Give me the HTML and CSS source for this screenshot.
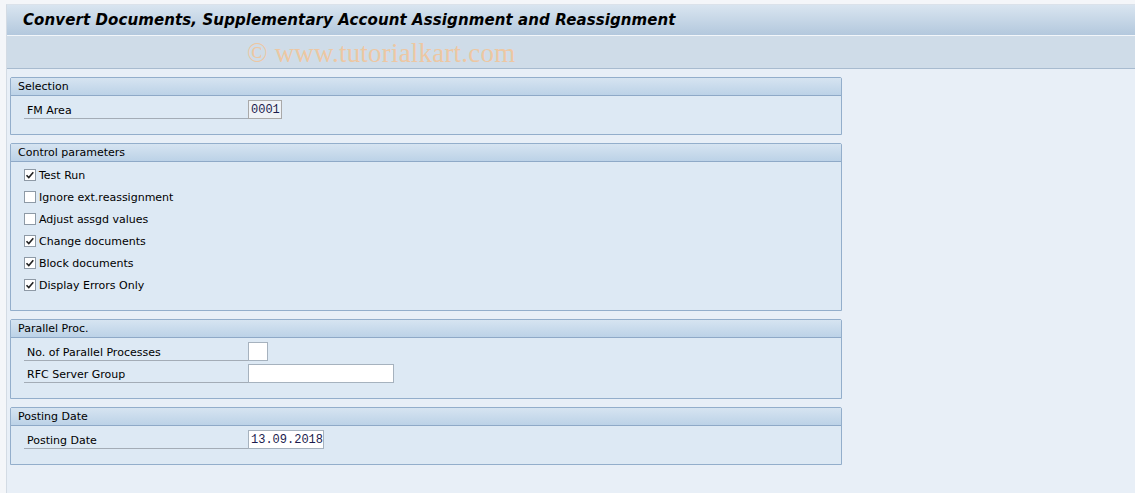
FILE: index.html
```html
<!DOCTYPE html>
<html>
<head>
<meta charset="utf-8">
<title>Convert Documents</title>
<link rel="stylesheet" href="styles.css">
</head>
<body>
<div class="screen">
  <div class="window">
    <div class="titlebar"><h1 class="title">Convert Documents, Supplementary Account Assignment and Reassignment</h1></div>
    <div class="toolbar"><span class="watermark">© www.tutorialkart.com</span></div>
    <div class="content">
      <section class="group">
        <div class="group-head">Selection</div>
        <div class="group-body">
          <div class="row">
            <span class="label">FM Area</span>
            <span class="field field-ro w-4">0001</span>
          </div>
        </div>
      </section>

      <section class="group">
        <div class="group-head">Control parameters</div>
        <div class="group-body">
          <div class="row check-row"><span class="cb checked"><svg viewBox="0 0 12 12" width="12" height="12"><path d="M2.5 6.2 L4.8 8.6 L9.3 3.2" fill="none" stroke="#222" stroke-width="1.6"/></svg></span><span class="cb-label">Test Run</span></div>
          <div class="row check-row"><span class="cb"></span><span class="cb-label">Ignore ext.reassignment</span></div>
          <div class="row check-row"><span class="cb"></span><span class="cb-label">Adjust assgd values</span></div>
          <div class="row check-row"><span class="cb checked"><svg viewBox="0 0 12 12" width="12" height="12"><path d="M2.5 6.2 L4.8 8.6 L9.3 3.2" fill="none" stroke="#222" stroke-width="1.6"/></svg></span><span class="cb-label">Change documents</span></div>
          <div class="row check-row"><span class="cb checked"><svg viewBox="0 0 12 12" width="12" height="12"><path d="M2.5 6.2 L4.8 8.6 L9.3 3.2" fill="none" stroke="#222" stroke-width="1.6"/></svg></span><span class="cb-label">Block documents</span></div>
          <div class="row check-row"><span class="cb checked"><svg viewBox="0 0 12 12" width="12" height="12"><path d="M2.5 6.2 L4.8 8.6 L9.3 3.2" fill="none" stroke="#222" stroke-width="1.6"/></svg></span><span class="cb-label">Display Errors Only</span></div>
        </div>
      </section>

      <section class="group">
        <div class="group-head">Parallel Proc.</div>
        <div class="group-body">
          <div class="row">
            <span class="label">No. of Parallel Processes</span>
            <span class="field w-2"></span>
          </div>
          <div class="row">
            <span class="label">RFC Server Group</span>
            <span class="field w-20"></span>
          </div>
        </div>
      </section>

      <section class="group">
        <div class="group-head">Posting Date</div>
        <div class="group-body">
          <div class="row">
            <span class="label">Posting Date</span>
            <span class="field w-10">13.09.2018</span>
          </div>
        </div>
      </section>
    </div>
  </div>
</div>
</body>
</html>
```

FILE: styles.css
```css
html, body {
  margin: 0;
  padding: 0;
}
body {
  background: #f4f6f9;
  font-family: "DejaVu Sans", "Liberation Sans", sans-serif;
  font-size: 11px;
  color: #000;
}
.screen {
  width: 1135px;
  height: 493px;
  padding: 4px 0 0 6px;
  box-sizing: border-box;
  overflow: hidden;
}
.window {
  height: 100%;
  border-left: 1px solid #d3dbe4;
  border-top: 1px solid #dbe2ea;
  display: flex;
  flex-direction: column;
  background: #e8eff7;
}
.titlebar {
  height: 30px;
  background: linear-gradient(#d9e5f0, #b3c8dd);
  border-bottom: 1px solid #f2f6fa;
  display: flex;
  align-items: center;
  padding-left: 16px;
}
.title {
  margin: 0;
  font-family: "DejaVu Sans", sans-serif;
  font-size: 15px;
  font-weight: bold;
  font-style: italic;
  letter-spacing: 0.1px;
  color: #000;
}
.toolbar {
  height: 32px;
  background: #cfdce8;
  border-bottom: 1px solid #a8bbcf;
  display: flex;
  align-items: center;
  padding-left: 240px;
}
.watermark {
  font-family: "Liberation Serif", serif;
  font-size: 27px;
  color: #edc7a2;
  letter-spacing: 0.2px;
  padding-top: 2px;
}
.content {
  flex: 1;
  padding: 8px 0 0 3px;
  display: flex;
  flex-direction: column;
  gap: 8px;
}
.group {
  width: 830px;
  border: 1px solid #93aecb;
  border-radius: 2px 2px 0 0;
  background: #dde9f4;
}
.group-head {
  height: 17px;
  line-height: 18px;
  padding-left: 7px;
  background: linear-gradient(#d6e4f1, #bcd2e7);
  border-bottom: 1px solid #8ea9c7;
  color: #000;
}
.group-body {
  padding: 2px 0 14px 13px;
}
.row {
  height: 22px;
  display: flex;
  align-items: center;
}
.label {
  width: 221px;
  height: 18px;
  line-height: 22px;
  padding-left: 3px;
  border-bottom: 1px solid #a3acb6;
  color: #000;
  margin-top: 1px;
}
.field {
  box-sizing: border-box;
  height: 19px;
  margin-top: 1px;
  border: 1px solid #a6b2be;
  background: #fff;
  font-family: "Liberation Mono", monospace;
  font-size: 12px;
  line-height: 18px;
  padding-left: 2px;
  color: #1c1c4e;
}
.field-ro {
  background: #eef2f6;
  border-color: #a9a9a9;
}
.w-4 { width: 34px; }
.w-2 { width: 20px; }
.w-20 { width: 146px; }
.w-10 { width: 76px; }
.cb {
  width: 12px;
  height: 12px;
  box-sizing: border-box;
  border: 1px solid #8e9aa6;
  background: #fff;
  margin-right: 3px;
  display: flex;
  align-items: center;
  justify-content: center;
}
.cb svg {
  display: block;
  flex: none;
}
.cb-label {
  color: #000;
  padding-top: 1px;
}
```
